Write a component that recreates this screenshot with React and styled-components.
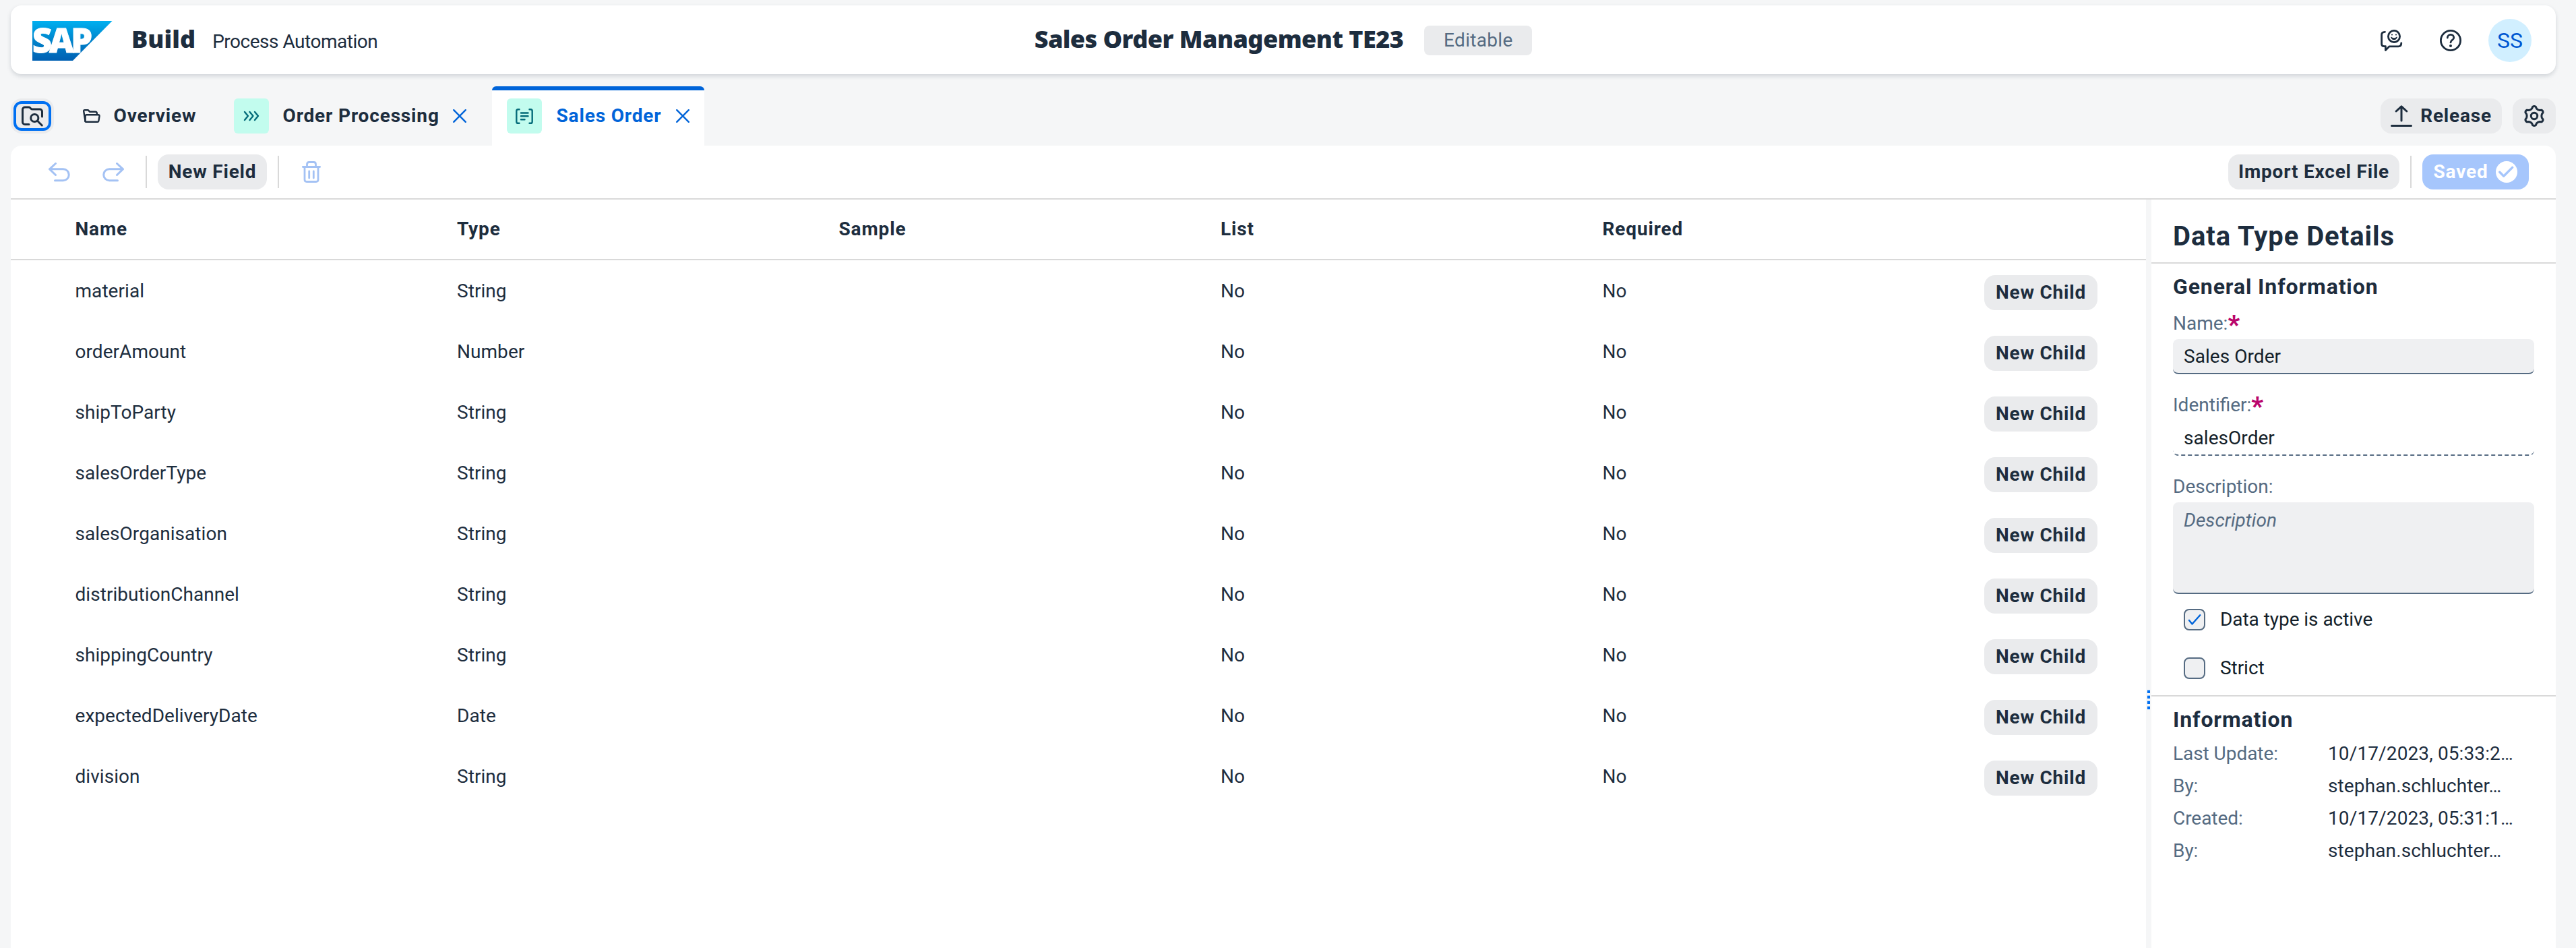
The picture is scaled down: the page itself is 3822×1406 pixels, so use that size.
import React from 'react';
import styled, { createGlobalStyle, css } from 'styled-components';

const ink = '#1d2d3e';
const blue = '#0064d9';
const line = '#d9d9d9';
const labelGrey = '#556b82';
const faded = '#a4c2f4';

const GlobalStyle = createGlobalStyle`
  * { box-sizing: border-box; }
  body {
    margin: 0;
    background: #f5f6f7;
    color: ${ink};
    font-family: Roboto, "Liberation Sans", sans-serif;
    font-size: 28px;
    line-height: 36px;
    letter-spacing: 0.05px;
  }
`;

const Page = styled.div`
  display: flex;
  flex-direction: column;
  width: 100%;
  height: 1406px;
  padding: 8px 30px 0 16px;
  overflow: hidden;
`;

const Svg = styled.svg`
  display: block;
  flex: none;
  overflow: visible;
  fill: none;
  stroke: ${(p) => p.$color || ink};
  stroke-width: ${(p) => p.$stroke || 3};
  stroke-linecap: round;
  stroke-linejoin: round;
`;

/* Shell bar */
const ShellBar = styled.header`
  display: grid;
  grid-template-columns: 1fr auto 1fr;
  align-items: center;
  flex: none;
  height: 102px;
  padding: 2px 36px 0 32px;
  background: #fff;
  border-radius: 16px;
  box-shadow: 0 3px 6px rgba(34, 53, 72, 0.17);
`;
const Brand = styled.div`
  display: flex;
  align-items: center;
`;
const Logo = styled.svg`
  display: block;
  width: 119px;
  height: 59px;
  margin-right: 28px;
  overflow: visible;
`;
const LogoText = styled.text`
  font-family: "Noto Sans", sans-serif;
  font-weight: 900;
  font-size: 49px;
  letter-spacing: -4px;
  fill: #fff;
  stroke: #fff;
  stroke-width: 1px;
`;
const BrandNames = styled.div`
  display: flex;
  align-items: baseline;
  gap: 25px;
  padding-bottom: 4px;
`;
const heavy = css`
  font-family: "Noto Sans", sans-serif;
  font-weight: 900;
  font-size: 36px;
  line-height: 48px;
  white-space: nowrap;
`;
const ProductName = styled.span`
  ${heavy}
`;
const ProductPart = styled.span`
  letter-spacing: -0.48px;
  white-space: nowrap;
`;
const ProjectTitle = styled.div`
  display: flex;
  align-items: center;
  gap: 31px;
  padding-left: 4px;
`;
const ProjectName = styled.h1`
  ${heavy}
  margin: 0;
  padding-bottom: 4px;
  letter-spacing: -0.54px;
`;
const Badge = styled.span`
  display: flex;
  align-items: center;
  justify-content: center;
  width: 160px;
  height: 44px;
  border-radius: 8px;
  background: #eaebed;
  color: ${labelGrey};
  letter-spacing: 0.3px;
`;
const ShellActions = styled.div`
  display: flex;
  align-items: center;
  justify-content: flex-end;
`;
const ShellIcon = styled.span`
  margin-right: ${(p) => p.$gap}px;
`;
const Avatar = styled.span`
  display: flex;
  align-items: center;
  justify-content: center;
  width: 64px;
  height: 64px;
  border-radius: 50%;
  background: #d1efff;
  color: #0057d2;
  font-size: 32px;
`;

/* Tab strip */
const TabStrip = styled.nav`
  display: flex;
  align-items: center;
  flex: none;
  height: 88px;
  margin-top: 18px;
`;
const Button = styled.button`
  display: flex;
  align-items: center;
  justify-content: center;
  flex: none;
  gap: 12px;
  width: ${(p) => p.$w}px;
  height: 52px;
  padding: 0;
  border: 0;
  border-radius: 16px;
  background: ${(p) => (p.$primary ? '#a6c6fc' : '#eaebed')};
  color: ${(p) => (p.$primary ? '#fff' : ink)};
  font: inherit;
  font-weight: 700;
  letter-spacing: 0.8px;
  white-space: nowrap;
  ${(p) => p.$focused && css`
    outline: 4px solid #0070f2;
    outline-offset: -8px;
  `}
`;
const Tab = styled.div`
  display: flex;
  align-items: center;
  gap: ${(p) => p.$gap || 20.5}px;
  width: ${(p) => p.$w}px;
  height: 88px;
  padding-left: 22px;
  color: ${(p) => (p.$active ? blue : ink)};
  background: ${(p) => (p.$active ? `linear-gradient(${blue} 6px, #fff 6px)` : 'none')};
  border-radius: 6px 6px 0 0;
  font-weight: 700;
  letter-spacing: 0.85px;
  white-space: nowrap;
`;
const Tabs = styled.div`
  display: flex;
  flex: 1;
  padding-left: 21px;
`;
const TabActions = styled.div`
  display: flex;
  gap: 16px;
`;
const Tile = styled.span`
  display: flex;
  align-items: center;
  justify-content: center;
  flex: none;
  width: 52px;
  height: 52px;
  border-radius: 6px;
  background: #c2fcee;
`;

/* Editor */
const Editor = styled.main`
  display: flex;
  flex-direction: column;
  flex: 1;
  min-height: 0;
  background: #fff;
  border-radius: 16px 16px 0 0;
`;
const Toolbar = styled.div`
  display: flex;
  align-items: center;
  justify-content: space-between;
  flex: none;
  height: 80px;
  padding: 0 40px 0 56px;
  border-bottom: 2px solid ${line};
`;
const ToolGroup = styled.div`
  display: flex;
  align-items: center;
  gap: ${(p) => p.$gap}px;
`;
const Divider = styled.span`
  width: 2px;
  height: 48px;
  background: ${line};
`;
const Body = styled.div`
  display: flex;
  flex: 1;
  min-height: 0;
`;

/* Table */
const Table = styled.section`
  flex: 1;
`;
const Row = styled.div`
  display: grid;
  grid-template-columns: repeat(5, 566.5px) 168px;
  align-items: center;
  height: 90px;
  padding: 2px 0 0 95.5px;
  ${(p) => p.$head && css`
    padding-top: 0;
    border-bottom: 2px solid ${line};
    font-weight: 700;
    letter-spacing: 0.85px;
  `}
`;
const RowAction = styled.div`
  padding-top: 4px;
`;

/* Splitter */
const Splitter = styled.div`
  display: flex;
  flex-direction: column;
  align-items: center;
  gap: 4px;
  flex: none;
  width: 8px;
  padding-top: 728px;
  background: #f5f6f7;
`;
const Grip = styled.span`
  width: 4px;
  height: 4px;
  background: #0070f2;
  box-shadow: 0 -1px #a9cdf8;
`;

/* Details panel */
const Details = styled.aside`
  flex: none;
  width: 600px;
`;
const PanelTitle = styled.h2`
  height: 95px;
  margin: 0;
  padding: 25px 32px 0;
  border-bottom: 2px solid ${line};
  font-size: 40px;
  line-height: 60px;
  font-weight: 700;
  letter-spacing: 0.95px;
`;
const Section = styled.section`
  padding: 10px 32px 4px;
  border-bottom: ${(p) => (p.$last ? 0 : 2)}px solid ${line};
`;
const SectionTitle = styled.h3`
  margin: 0;
  font-size: 32px;
  line-height: 48px;
  font-weight: 700;
  letter-spacing: 0.88px;
`;
const Label = styled.div`
  margin: ${(p) => p.$top}px 0 5px;
  height: 36px;
  color: ${labelGrey};
  letter-spacing: 0;
`;
const Star = styled.span`
  color: #ba066c;
  font-size: 38px;
  font-weight: 900;
  line-height: 0;
  vertical-align: -6px;
`;
const Field = styled.div`
  height: ${(p) => p.$h || 52}px;
  padding: ${(p) => (p.$h ? 9 : 8)}px 16px 0;
  border-radius: 8px;
  border-bottom: 2px ${(p) => (p.$readOnly ? 'dashed' : 'solid')} ${labelGrey};
  background: ${(p) => (p.$readOnly ? 'transparent' : '#eff0f2')};
  color: ${(p) => (p.$placeholder ? labelGrey : '#131e29')};
  font-style: ${(p) => (p.$placeholder ? 'italic' : 'normal')};
`;
const CheckRow = styled.label`
  display: flex;
  align-items: center;
  gap: 22px;
  height: 72px;
  padding-left: 16px;
  color: #131e29;
  letter-spacing: -0.05px;
`;
const CheckList = styled.div`
  padding-top: 2px;
`;
const Box = styled.span`
  width: 32px;
  height: 32px;
  border: 2px solid ${labelGrey};
  border-radius: 8px;
  background: #eff0f2;
`;
const Facts = styled.dl`
  display: grid;
  grid-template-columns: 230px 275px;
  grid-auto-rows: 48px;
  align-items: center;
  margin: 3px 0 0;
`;
const Term = styled.dt`
  color: ${labelGrey};
  letter-spacing: -0.05px;
`;
const Value = styled.dd`
  margin: 0;
  letter-spacing: 0.12px;
  white-space: nowrap;
`;

const FolderSearchIcon = () => (
  <Svg width="32" height="32" viewBox="0 0 32 32">
    <path d="M11 28.500H5A3.500 3.500 0 0 1 1.500 25V6.500A3.500 3.500 0 0 1 5 3h5.500c1 0 1.600.3 2.300 1l1.200 1.200c.6.6 1.200.8 2 .8H27a3.500 3.500 0 0 1 3.500 3.500V17" />
    <circle cx="19.300" cy="19" r="5.600" />
    <path d="M23.500 23.200l6.800 6.800" />
  </Svg>
);
const FolderIcon = () => (
  <Svg width="26" height="20" viewBox="0 0 26 20" $stroke={2.4}>
    <path d="M3.600 18L1.200 3Q1 1.200 2.800 1.200H7q1 0 1.600.8L10 3.800h8.500q2.300 0 2.300 2.500v1.500" />
    <path d="M5.200 8.300h17.600q1.900 0 1.700 1.900l-1.100 7q-.3 1.600-1.900 1.600H4.700q-1.400 0-1.300-1.300l.3-7.700q.2-1.500 1.500-1.500z" />
  </Svg>
);
const ChevronsIcon = () => (
  <Svg width="24" height="16" viewBox="0 0 24 16" $stroke={2.4} $color="#046c7a">
    <path d="M2 2l5 6-5 6M9.500 2l5 6-5 6M17 2l5 6-5 6" />
  </Svg>
);
const DataTypeIcon = () => (
  <Svg width="26" height="23" viewBox="0 0 26 23" $stroke={2.4} $color="#046c7a">
    <path d="M5.500 1.200H3.700q-2.400 0-2.400 2.400v15.800q0 2.400 2.400 2.400h1.800M20.500 1.200h1.800q2.400 0 2.400 2.400v15.800q0 2.400-2.400 2.400h-1.800" />
    <path d="M8 6.500h10.500M8 11.300h10.500M8 16.200h5.500" />
  </Svg>
);
const CloseIcon = () => (
  <Svg width="20" height="20" viewBox="0 0 20 20" $stroke={2.4} $color={blue}>
    <path d="M1.200 1.200l17.600 17.600M18.800 1.200L1.200 18.800" />
  </Svg>
);
const UndoIcon = ({ flip }) => (
  <Svg width="32" height="30" viewBox="0 0 32 30" $color={faded}>
    <g transform={flip ? 'matrix(-1 0 0 1 32 0)' : undefined}>
      <path d="M10.500 2.500L1.500 10.800l9 8.700M1.500 10.800H21.800a8.450 8.450 0 0 1 0 16.900H9.500" />
    </g>
  </Svg>
);
const TrashIcon = () => (
  <Svg width="32" height="32" viewBox="0 0 32 32" $color={faded} $stroke={2.8}>
    <path d="M3.400 8.500h25.200M9.500 8V4.500q0-3 3-3h7q3 0 3 3V8M6 9v18.500q0 3 3 3h14q3 0 3-3V9" />
    <path d="M12.700 15v10M19.300 15v10" />
  </Svg>
);
const FeedbackIcon = () => (
  <Svg width="32" height="32" viewBox="0 0 32 32" $stroke={2.8}>
    <path d="M6.500 3.300c-3.300.2-4.900 1.300-4.900 4.200V21c0 2.500 1 3.600 3.500 3.600h2.300v6L13 24.800h13.500c3 0 4.300-1.500 4.300-5" />
    <circle cx="20" cy="10" r="8.600" />
    <path d="M15.800 11.300q4.200 3.400 8.400 0-1.200 3.200-4.200 3.200t-4.200-3.200z" strokeWidth="1.400" fill={ink} />
    <path d="M17 7.500h.01M23 7.500h.01" strokeWidth="2.200" />
  </Svg>
);
const HelpIcon = () => (
  <Svg width="32" height="32" viewBox="0 0 32 32" $stroke={2.8}>
    <circle cx="16" cy="16" r="14.600" />
    <path d="M11.300 12c0-2.800 2-4.600 4.700-4.600s4.700 1.800 4.700 4.500c0 3.700-4.700 3.400-4.700 7" />
    <path d="M16 24h.01" strokeWidth="4" />
  </Svg>
);
const ReleaseIcon = () => (
  <Svg width="32" height="32" viewBox="0 0 32 32">
    <path d="M8.200 9L16 1.800 23.800 9M16 2v21M1.500 30.400h29" />
  </Svg>
);

const polar = (r, deg) => {
  const a = ((deg - 90) * Math.PI) / 180;
  return `${(16 + r * Math.cos(a)).toFixed(2)} ${(16 + r * Math.sin(a)).toFixed(2)}`;
};
const gearPath = `${[0, 60, 120, 180, 240, 300]
  .map((t, i) => `${i ? 'L' : 'M'}${polar(14, t - 9)}Q${polar(15.2, t)} ${polar(14, t + 9)}L${polar(11.6, t + 17)}Q${polar(10.4, t + 30)} ${polar(11.6, t + 43)}`)
  .join('')}Z`;
const GearIcon = () => (
  <Svg width="32" height="32" viewBox="0 0 32 32">
    <path d={gearPath} />
    <circle cx="16" cy="16" r="4.700" />
  </Svg>
);
const SavedIcon = () => (
  <Svg width="32" height="32" viewBox="0 0 32 32" $color="#a6c6fc" $stroke={3.4}>
    <circle cx="16" cy="16" r="16" fill="#fff" stroke="none" />
    <path d="M5.800 16.300l5.900 5.900L24.600 9.400" />
  </Svg>
);
const CheckIcon = () => (
  <Svg width="28" height="28" viewBox="2 2 28 28" $color={blue} $stroke={2.4}>
    <path d="M8 17l4.500 5.500L24.300 9.300" />
  </Svg>
);
const SapLogo = () => (
  <Logo viewBox="0 0 119 59">
    <defs>
      <linearGradient id="sap" x1="0" y1="0" x2="0" y2="1">
        <stop offset="0" stopColor="#00b0f0" />
        <stop offset="0.5" stopColor="#0083cb" />
        <stop offset="1" stopColor="#0060b3" />
      </linearGradient>
    </defs>
    <path d="M0 0h118.500L60 59H0z" fill="url(#sap)" />
    <LogoText x="0" y="47" textLength="85" lengthAdjust="spacingAndGlyphs">SAP</LogoText>
  </Logo>
);

const fields = [
  ['material', 'String'],
  ['orderAmount', 'Number'],
  ['shipToParty', 'String'],
  ['salesOrderType', 'String'],
  ['salesOrganisation', 'String'],
  ['distributionChannel', 'String'],
  ['shippingCountry', 'String'],
  ['expectedDeliveryDate', 'Date'],
  ['division', 'String'],
];
const facts = [
  ['Last Update:', '10/17/2023, 05:33:2…'],
  ['By:', 'stephan.schluchter…'],
  ['Created:', '10/17/2023, 05:31:1…'],
  ['By:', 'stephan.schluchter…'],
];

export default function App() {
  return (
    <Page>
      <GlobalStyle />
      <ShellBar>
        <Brand>
          <SapLogo />
          <BrandNames>
            <ProductName>Build</ProductName>
            <ProductPart>Process Automation</ProductPart>
          </BrandNames>
        </Brand>
        <ProjectTitle>
          <ProjectName>Sales Order Management TE23</ProjectName>
          <Badge>Editable</Badge>
        </ProjectTitle>
        <ShellActions>
          <ShellIcon $gap={56}><FeedbackIcon /></ShellIcon>
          <ShellIcon $gap={40}><HelpIcon /></ShellIcon>
          <Avatar>SS</Avatar>
        </ShellActions>
      </ShellBar>

      <TabStrip>
        <Button $w={64} $focused><FolderSearchIcon /></Button>
        <Tabs>
          <Tab $w={224} $gap={19.5}><FolderIcon />Overview</Tab>
          <Tab $w={405}><Tile><ChevronsIcon /></Tile>Order Processing<CloseIcon /></Tab>
          <Tab $w={315} $gap={21.5} $active><Tile><DataTypeIcon /></Tile>Sales Order<CloseIcon /></Tab>
        </Tabs>
        <TabActions>
          <Button $w={180}><ReleaseIcon />Release</Button>
          <Button $w={64}><GearIcon /></Button>
        </TabActions>
      </TabStrip>

      <Editor>
        <Toolbar>
          <ToolGroup $gap={32}>
            <ToolGroup $gap={48}>
              <UndoIcon />
              <UndoIcon flip />
            </ToolGroup>
            <ToolGroup $gap={16}>
              <Divider />
              <Button $w={162}>New Field</Button>
              <Divider />
            </ToolGroup>
            <TrashIcon />
          </ToolGroup>
          <ToolGroup $gap={16}>
            <Button $w={254}>Import Excel File</Button>
            <Divider />
            <Button $w={158} $primary>Saved<SavedIcon /></Button>
          </ToolGroup>
        </Toolbar>
        <Body>
          <Table>
            <Row $head>
              <span>Name</span>
              <span>Type</span>
              <span>Sample</span>
              <span>List</span>
              <span>Required</span>
            </Row>
            {fields.map(([name, type]) => (
              <Row key={name}>
                <span>{name}</span>
                <span>{type}</span>
                <span />
                <span>No</span>
                <span>No</span>
                <RowAction><Button $w={168}>New Child</Button></RowAction>
              </Row>
            ))}
          </Table>
          <Splitter>
            <Grip /><Grip /><Grip /><Grip />
          </Splitter>
          <Details>
            <PanelTitle>Data Type Details</PanelTitle>
            <Section>
              <SectionTitle>General Information</SectionTitle>
              <Label $top={13}>Name:<Star>*</Star></Label>
              <Field>Sales Order</Field>
              <Label $top={28}>Identifier:<Star>*</Star></Label>
              <Field $readOnly>salesOrder</Field>
              <Label $top={28}>Description:</Label>
              <Field $h={136} $placeholder>Description</Field>
              <CheckList>
                <CheckRow><Box><CheckIcon /></Box>Data type is active</CheckRow>
                <CheckRow><Box />Strict</CheckRow>
              </CheckList>
            </Section>
            <Section $last>
              <SectionTitle>Information</SectionTitle>
              <Facts>
                {facts.map(([term, value], i) => (
                  <React.Fragment key={i}>
                    <Term>{term}</Term>
                    <Value>{value}</Value>
                  </React.Fragment>
                ))}
              </Facts>
            </Section>
          </Details>
        </Body>
      </Editor>
    </Page>
  );
}
